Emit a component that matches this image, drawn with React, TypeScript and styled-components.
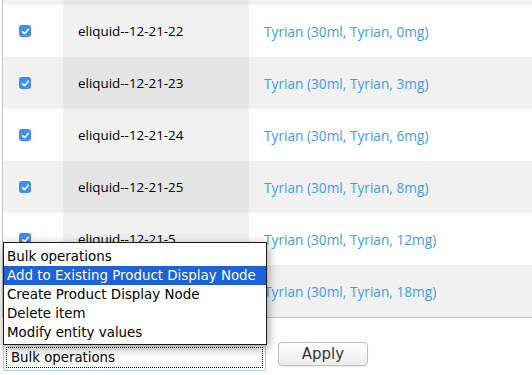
import React from 'react';
import styled, { createGlobalStyle } from 'styled-components';

const GlobalStyle = createGlobalStyle`
  html, body {
    margin: 0;
    padding: 0;
    background: #fff;
    overflow: hidden;
  }
  body {
    font-family: 'Open Sans', 'DejaVu Sans', sans-serif;
  }
`;

interface Item {
  sku: string;
  title: string;
}

const items: Item[] = [
  { sku: '', title: '' },
  { sku: 'eliquid--12-21-22', title: 'Tyrian (30ml, Tyrian, 0mg)' },
  { sku: 'eliquid--12-21-23', title: 'Tyrian (30ml, Tyrian, 3mg)' },
  { sku: 'eliquid--12-21-24', title: 'Tyrian (30ml, Tyrian, 6mg)' },
  { sku: 'eliquid--12-21-25', title: 'Tyrian (30ml, Tyrian, 8mg)' },
  { sku: 'eliquid--12-21-5', title: 'Tyrian (30ml, Tyrian, 12mg)' },
  { sku: 'eliquid--12-21-6', title: 'Tyrian (30ml, Tyrian, 18mg)' },
];

const operations = [
  'Bulk operations',
  'Add to Existing Product Display Node',
  'Create Product Display Node',
  'Delete item',
  'Modify entity values',
];

function Checkbox() {
  return (
    <Box>
      <svg width="9" height="9" viewBox="0 0 9 9">
        <path d="M1.6 4.8 L3.6 6.7 L7.4 2.3" fill="none" stroke="#fff" strokeWidth="1.6" strokeLinecap="round" strokeLinejoin="round" />
      </svg>
    </Box>
  );
}

export default function App() {
  return (
    <>
      <GlobalStyle />
      <Page>
        <Table>
          {items.map((item, i) => (
            <Row key={i} $odd={i % 2 === 0} $cut={i === 0}>
              <CheckCell>{!item.sku ? null : <Checkbox />}</CheckCell>
              <SkuCell $odd={i % 2 === 0}>{item.sku}</SkuCell>
              <TitleCell>{item.title && <TitleLink>{item.title}</TitleLink>}</TitleCell>
            </Row>
          ))}
        </Table>
        <Actions>
          <FakeSelect>
            <FocusRing>Bulk operations</FocusRing>
          </FakeSelect>
          <ApplyButton>Apply</ApplyButton>
        </Actions>
        <Menu>
          {operations.map((op, i) => (
            <MenuItem key={op} $active={i === 1}>
              {op}
            </MenuItem>
          ))}
        </Menu>
      </Page>
    </>
  );
}

const Page = styled.div`
  position: relative;
  width: 532px;
  height: 375px;
  overflow: hidden;
`;

const Table = styled.div`
  display: flex;
  flex-direction: column;
  margin-left: 2px;
  border-left: 1px solid #c6c6c6;
  border-bottom: 1px solid #c4c2bc;
`;

const Row = styled.div<{ $odd: boolean; $cut: boolean }>`
  display: grid;
  grid-template-columns: 60px 186px 1fr;
  height: ${(p) => (p.$cut ? '5px' : '52px')};
  background: ${(p) => (p.$odd ? '#f1f1f1' : '#ffffff')};
  color: #000;
`;

const CheckCell = styled.div`
  display: flex;
  align-items: center;
  padding-left: 16px;
`;

const Box = styled.span`
  display: inline-flex;
  align-items: center;
  justify-content: center;
  width: 12px;
  height: 12px;
  border-radius: 3px;
  background: #3b8ff6;
`;

const SkuCell = styled.div<{ $odd: boolean }>`
  display: flex;
  align-items: center;
  padding-left: 15px;
  font-size: 13.4px;
  background: ${(p) => (p.$odd ? '#e5e5e5' : '#f1f1f1')};
`;

const TitleCell = styled.div`
  display: flex;
  align-items: center;
  padding-left: 15px;
  font-size: 13.7px;
`;

const TitleLink = styled.span`
  color: #3f9cf3;
  cursor: pointer;
`;

const Actions = styled.div`
  display: flex;
  align-items: flex-start;
  gap: 12px;
  padding: 24px 0 0 3px;
`;

const FakeSelect = styled.div`
  box-sizing: border-box;
  width: 263px;
  height: 27px;
  margin-top: 2px;
  padding: 2px;
  border: 1px solid #a9c7ec;
  border-radius: 2px;
  background: #fff;
`;

const FocusRing = styled.div`
  box-sizing: border-box;
  height: 100%;
  padding-left: 4px;
  border: 1px dotted #000;
  font-family: 'DejaVu Sans', sans-serif;
  font-size: 13.3px;
  line-height: 19px;
  color: #000;
`;

const ApplyButton = styled.button`
  box-sizing: border-box;
  width: 90px;
  height: 24px;
  border: 1px solid #bdbdbd;
  border-radius: 4px;
  background: linear-gradient(#ffffff, #ececec);
  box-shadow: 0 1px 1px rgba(0, 0, 0, 0.08);
  font-family: 'DejaVu Sans', sans-serif;
  font-size: 15px;
  color: #333;
  padding: 0;
`;

const Menu = styled.div`
  position: absolute;
  left: 3px;
  top: 242px;
  box-sizing: border-box;
  width: 264px;
  padding: 4px 0 2px;
  background: #fff;
  border: 1px solid #1c1c1c;
  box-shadow: 1px 3px 10px rgba(0, 0, 0, 0.4);
  font-family: 'DejaVu Sans', sans-serif;
  font-size: 13.4px;
`;

const MenuItem = styled.div<{ $active: boolean }>`
  height: 19px;
  line-height: 19px;
  padding-left: 3px;
  white-space: nowrap;
  color: ${(p) => (p.$active ? '#fff' : '#000')};
  background: ${(p) => (p.$active ? '#1d62d8' : 'transparent')};
`;
